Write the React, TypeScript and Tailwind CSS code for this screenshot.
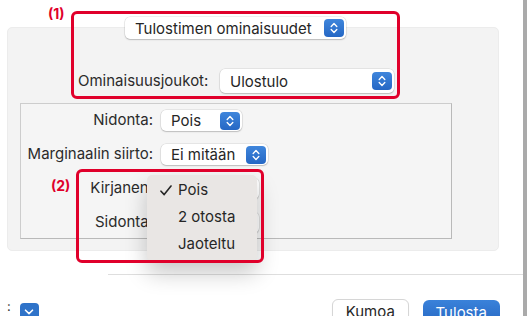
import React from 'react';

const Stepper = ({ className = '' }: { className?: string }) => (
  <span
    className={`flex shrink-0 items-center justify-center rounded-[4px] bg-gradient-to-b from-[#3f86dc] to-[#2567c4] ${className}`}
  >
    <svg width="8" height="12" viewBox="0 0 8 12" fill="none">
      <path d="M1.2 4.4 4 1.6l2.8 2.8M1.2 7.6 4 10.4l2.8-2.8" stroke="white" strokeWidth="1.4" strokeLinecap="round" strokeLinejoin="round" />
    </svg>
  </span>
);

const Popup = ({ label, width, height = 'h-[21px]' }: { label: string; width: string; height?: string }) => (
  <div
    className={`flex shrink-0 items-center justify-between rounded-[5px] bg-white pl-[10px] pr-[2px] shadow-[0_0_0_0.5px_rgba(0,0,0,0.12),0_1px_1.5px_rgba(0,0,0,0.18)] ${width} ${height}`}
  >
    <span className="whitespace-nowrap text-[15px] leading-none text-[#262626]">{label}</span>
    <Stepper className="h-[18px] w-[20px]" />
  </div>
);

const Row = ({ label, value, width }: { label: string; value: string; width: string }) => (
  <div className="flex h-[21px] shrink-0 items-center gap-[8px]">
    <span className="w-[132px] whitespace-nowrap text-right text-[15px] text-[#2b2b2b]">{label}</span>
    <Popup label={value} width={width} />
  </div>
);

const MenuItem = ({ label, checked }: { label: string; checked?: boolean }) => (
  <div className="flex h-[27px] items-center">
    <span className="flex w-[31px] justify-end pr-[6px]">
      {checked && (
        <svg width="12" height="11" viewBox="0 0 12 11" fill="none">
          <path d="M1 6.2 4.2 9.6 11 1" stroke="#262626" strokeWidth="1.6" strokeLinecap="round" strokeLinejoin="round" />
        </svg>
      )}
    </span>
    <span className="text-[15px] text-[#262626]">{label}</span>
  </div>
);

export default function App() {
  return (
    <div className="relative flex h-[316px] w-[528px] overflow-hidden bg-white font-['Inter',sans-serif]">
      <div className="flex w-[523px] shrink-0 flex-col">
        <div className="relative z-10 ml-[125px] mt-[17px] shrink-0">
          <Popup label="Tulostimen ominaisuudet" width="w-[221px]" height="h-[22px]" />
        </div>

        <div className="-mt-[12px] ml-[7px] h-[224px] w-[492px] shrink-0 rounded-[5px] border border-[#ececec] bg-[#f3f3f3]">
          <div className="ml-[70px] mt-[41px] flex items-center">
            <span className="w-[142px] text-[15px] text-[#2b2b2b]">Ominaisuusjoukot:</span>
            <Popup label="Ulostulo" width="w-[174px]" height="h-[24px]" />
          </div>

          <div className="ml-[12px] mt-[10px] flex h-[136px] w-[432px] flex-col gap-[13px] border border-[#cdcdcd] border-b-[#b9b9b9] border-r-[#b9b9b9] bg-[#f5f5f5] pt-[6px]">
            <Row label="Nidonta:" value="Pois" width="w-[81px]" />
            <Row label="Marginaalin siirto:" value="Ei mitään" width="w-[107px]" />
            <Row label="Kirjanen:" value="Pois" width="w-[98px]" />
            <Row label="Sidonta:" value="Vasen" width="w-[98px]" />
          </div>
        </div>

        <div className="ml-[108px] mt-[23px] h-px shrink-0 bg-[#dedede]" />

        <div className="mt-[24px] flex shrink-0 items-start">
          <span className="ml-[7px] mt-[1px] text-[13px] leading-none text-[#333]">:</span>
          <span className="ml-[9px] mt-[4px] flex h-[18px] w-[19px] items-center justify-center rounded-[4px] bg-[#2f73c9]">
            <svg width="10" height="6" viewBox="0 0 10 6" fill="none">
              <path d="M1.5 1.2 5 4.6l3.5-3.4" stroke="white" strokeWidth="1.6" strokeLinecap="round" strokeLinejoin="round" />
            </svg>
          </span>
          <button className="ml-[293px] flex h-[24px] w-[77px] items-center justify-center rounded-[6px] border border-[#d6d6d6] bg-white pt-[2px] text-[15px] text-[#262626] shadow-[0_1px_1px_rgba(0,0,0,0.08)]">
            Kumoa
          </button>
          <button className="ml-[14px] mt-[1px] flex h-[24px] w-[77px] items-center justify-center rounded-[6px] bg-gradient-to-b from-[#3a82da] to-[#2768c3] pt-[2px] text-[15px] text-white">
            Tulosta
          </button>
        </div>
      </div>
      <div className="w-[4px] shrink-0 bg-[#aaaaaa]" />
      <div className="w-[1px] shrink-0 bg-white" />

      {/* dropdown menu over Kirjanen / Sidonta */}
      <div className="absolute left-[147px] top-[175px] h-[86px] w-[110px] rounded-[5px] bg-[#e9e6e4] pt-[2px] shadow-[0_12px_22px_rgba(0,0,0,0.22)]">
        <MenuItem label="Pois" checked />
        <MenuItem label="2 otosta" />
        <MenuItem label="Jaoteltu" />
      </div>

      {/* annotations */}
      <span className="absolute left-[48px] top-[3px] text-[14px] font-bold text-[#e0002b]">(1)</span>
      <div className="absolute left-[71px] top-[11px] h-[88px] w-[329px] rounded-[6px] border-[3px] border-[#e0002b]" />
      <span className="absolute left-[51px] top-[175px] text-[14px] font-bold text-[#e0002b]">(2)</span>
      <div className="absolute left-[76px] top-[169px] h-[94px] w-[188px] rounded-[6px] border-[3px] border-[#e0002b]" />
    </div>
  );
}
